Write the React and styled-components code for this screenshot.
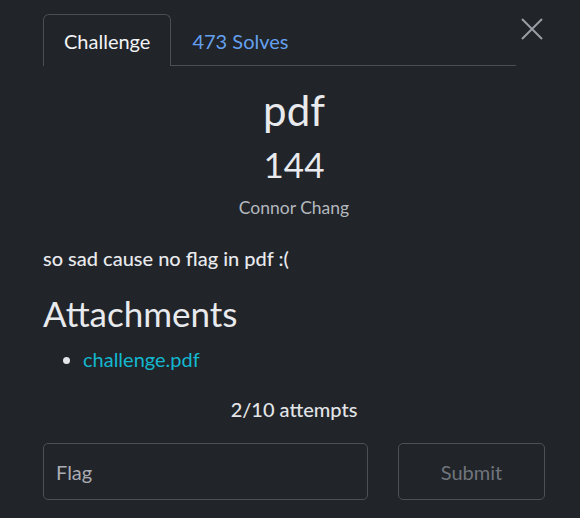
import React from 'react';
import styled, { createGlobalStyle } from 'styled-components';

const Global = createGlobalStyle`
  html, body { margin: 0; padding: 0; background: #212429; }
  body { font-family: Lato, "Open Sans", sans-serif; color: #e3e5e8; }
`;

const Modal = styled.div`
  width: 580px;
  height: 518px;
  box-sizing: border-box;
  padding: 14px 35px 0 43px;
  position: relative;
`;

const TabBar = styled.div`
  display: flex;
  width: 473px;
  border-bottom: 1px solid #4a4e55;
`;

const Tab = styled.div`
  height: 52px;
  box-sizing: border-box;
  padding: 0 20px;
  display: flex;
  align-items: center;
  font-size: 20px;
  color: ${p => (p.active ? '#f2f3f5' : '#64a0ee')};
  border: 1px solid ${p => (p.active ? '#4a4e55' : 'transparent')};
  border-bottom: none;
  border-radius: 6px 6px 0 0;
  margin-bottom: -1px;
  background: ${p => (p.active ? '#212429' : 'transparent')};
`;

const Close = styled.button`
  position: absolute;
  top: 17px;
  right: 36px;
  background: none;
  border: none;
  padding: 0;
  width: 24px;
  height: 24px;
  cursor: pointer;
`;

const Header = styled.div`
  display: flex;
  flex-direction: column;
  align-items: center;
  padding-top: 18px;
`;

const Title = styled.h1`
  margin: 0;
  font-size: 42px;
  font-weight: 400;
  line-height: 52px;
  color: #e8eaed;
`;

const Points = styled.h2`
  margin: 6px 0 0;
  font-size: 35px;
  font-weight: 400;
  line-height: 44px;
  color: #e8eaed;
`;

const Author = styled.div`
  font-size: 17.5px;
  line-height: 24px;
  color: #b4b8be;
  margin-top: 10px;
`;

const Description = styled.p`
  margin: 24px 0 0;
  font-size: 20px;
  font-weight: 500;
  line-height: 28px;
  color: #e8eaed;
`;

const SectionTitle = styled.h3`
  margin: 21px 0 0;
  font-size: 35px;
  font-weight: 400;
  line-height: 40px;
  color: #e8eaed;
`;

const List = styled.ul`
  margin: 12px 0 0;
  padding-left: 40px;
  font-size: 20px;
  line-height: 28px;
  li::marker { color: #e3e5e8; }
`;

const FileLink = styled.a`
  color: #13b8cf;
  text-decoration: none;
`;

const Attempts = styled.div`
  margin-top: 22px;
  text-align: center;
  font-size: 20px;
  font-weight: 500;
  line-height: 28px;
  color: #e3e5e8;
`;

const Form = styled.div`
  display: flex;
  gap: 30px;
  margin-top: 20px;
`;

const FlagInput = styled.input`
  width: 325px;
  height: 57px;
  box-sizing: border-box;
  background: transparent;
  border: 1px solid #4c5057;
  border-radius: 5px;
  padding: 0 12px;
  font-family: Lato, sans-serif;
  font-size: 20px;
  color: #e3e5e8;
  &::placeholder { color: #a9adb3; }
`;

const SubmitButton = styled.button`
  width: 147px;
  height: 57px;
  background: transparent;
  border: 1px solid #4c5057;
  border-radius: 5px;
  font-family: Lato, sans-serif;
  font-size: 20px;
  color: #70757c;
`;

export default function App() {
  return (
    <Modal>
      <Global />
      <TabBar>
        <Tab active>Challenge</Tab>
        <Tab>473 Solves</Tab>
      </TabBar>
      <Close aria-label="close">
        <svg width="24" height="24" viewBox="0 0 24 24">
          <path d="M2 2 L22 22 M22 2 L2 22" stroke="#9a9ea4" strokeWidth="2" fill="none" />
        </svg>
      </Close>
      <Header>
        <Title>pdf</Title>
        <Points>144</Points>
        <Author>Connor Chang</Author>
      </Header>
      <Description>so sad cause no flag in pdf :(</Description>
      <SectionTitle>Attachments</SectionTitle>
      <List>
        <li><FileLink href="#">challenge.pdf</FileLink></li>
      </List>
      <Attempts>2/10 attempts</Attempts>
      <Form>
        <FlagInput placeholder="Flag" />
        <SubmitButton>Submit</SubmitButton>
      </Form>
    </Modal>
  );
}
